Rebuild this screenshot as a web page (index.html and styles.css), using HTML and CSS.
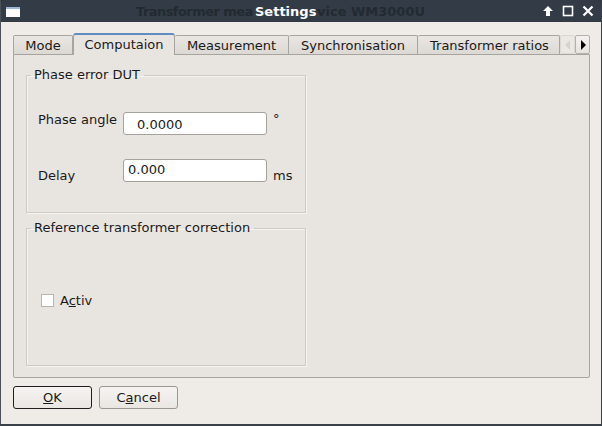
FILE: index.html
```html
<!DOCTYPE html>
<html>
<head>
<meta charset="utf-8">
<link rel="stylesheet" href="styles.css">
</head>
<body>
<div class="window">
  <div class="titlebar">
    <span class="winicon"></span>
    <span class="behind b1">Transformer mea</span>
    <span class="title">Settings</span>
    <span class="behind b2">vice WM3000U</span>
    <div class="wbtns">
      <svg width="12" height="12" viewBox="0 0 12 12"><path d="M6 1 L11 6 H8 V11 H4 V6 H1 Z" fill="#fff"/></svg>
      <svg width="12" height="12" viewBox="0 0 12 12"><rect x="1.5" y="1.5" width="9" height="9" fill="none" stroke="#fff" stroke-width="1.6"/></svg>
      <svg width="12" height="12" viewBox="0 0 12 12"><path d="M1.5 1.5 L10.5 10.5 M10.5 1.5 L1.5 10.5" stroke="#fff" stroke-width="2.2"/></svg>
    </div>
  </div>
  <div class="content">
    <div class="tabbar">
      <div class="tab w-mode">Mode</div>
      <div class="tab active w-comp">Computaion</div>
      <div class="tab w-meas">Measurement</div>
      <div class="tab w-sync">Synchronisation</div>
      <div class="tab w-ratio">Transformer ratios</div>
      <div class="scroll dis"><svg width="6" height="10" viewBox="0 0 6 10"><path d="M5 0 V10 L0 5 Z" fill="#d6d3cf"/></svg></div>
      <div class="scroll"><svg width="6" height="10" viewBox="0 0 6 10"><path d="M1 0 V10 L6 5 Z" fill="#000"/></svg></div>
    </div>
    <div class="pane">
      <fieldset class="group g1">
        <legend>Phase error DUT</legend>
        <div class="row r1">
          <span class="lbl">Phase angle</span>
          <div class="input in1">0.0000</div>
          <span class="unit deg">°</span>
        </div>
        <div class="row r2">
          <span class="lbl">Delay</span>
          <div class="input in2">0.000</div>
          <span class="unit ms">ms</span>
        </div>
      </fieldset>
      <fieldset class="group g2">
        <legend>Reference transformer correction</legend>
        <label class="check"><span class="box"></span><span>A<u>c</u>tiv</span></label>
      </fieldset>
    </div>
    <div class="buttons">
      <div class="btn default"><u>O</u>K</div>
      <div class="btn">C<u>a</u>ncel</div>
    </div>
  </div>
</div>
</body>
</html>
```

FILE: styles.css
```css
html, body {
  margin: 0;
  padding: 0;
  width: 602px;
  height: 426px;
  overflow: hidden;
  background: #2b333b;
}
.window {
  width: 602px;
  height: 426px;
  box-sizing: border-box;
  display: flex;
  flex-direction: column;
  font-family: "DejaVu Sans", sans-serif;
  font-size: 13px;
  color: #1a1a1a;
  border-right: 1px solid #3a4148;
  border-bottom: 2px solid #3a4148;
  border-left: 1px solid #4a5158;
}
.titlebar {
  position: relative;
  height: 22px;
  background: #333c46;
  border-radius: 4px 4px 0 0;
  display: flex;
  align-items: center;
  flex-shrink: 0;
}
.winicon {
  margin-left: 5px;
  width: 14px;
  height: 8px;
  background: #fbfbfb;
  border-top: 2px solid #9fb7d4;
  margin-top: 1px;
}
.behind {
  position: absolute;
  top: 4px;
  font-weight: bold;
  color: #222a31;
  white-space: nowrap;
}
.b1 { left: 135px; letter-spacing: -0.55px; }
.b2 { left: 316px; }
.title {
  position: absolute;
  left: 254px;
  top: 4px;
  color: #fff;
  font-weight: bold;
}
.wbtns {
  margin-left: auto;
  margin-right: 7px;
  display: flex;
  gap: 8px;
  align-items: center;
}
.content {
  flex: 1;
  background: #efebe7;
  padding: 11px 11px 0 11px;
  display: flex;
  flex-direction: column;
}
.tabbar {
  display: flex;
  align-items: flex-end;
  height: 21px;
  position: relative;
  z-index: 2;
  padding-left: 1px;
}
.tab {
  box-sizing: border-box;
  height: 19px;
  border: 1px solid #a8a4a0;
  border-bottom: none;
  border-left: none;
  border-radius: 2px 2px 0 0;
  background: linear-gradient(#eae7e3, #dcd8d3);
  text-align: center;
  line-height: 19px;
  white-space: nowrap;
  overflow: hidden;
}
.tab.w-mode { border-left: 1px solid #a8a4a0; }
.tab.active {
  height: 22px;
  margin-bottom: -1px;
  background: #e8e4e0;
  border-left: 1px solid #a8a4a0;
  border-top: 2px solid #5f8dc2;
  line-height: 19px;
  border-radius: 3px 3px 0 0;
}
.w-mode { width: 60px; }
.w-comp { width: 102px; }
.w-meas { width: 114px; }
.w-sync { width: 129px; }
.w-ratio { width: 142px; text-align: left; padding-left: 12px; }
.scroll {
  box-sizing: border-box;
  width: 15px;
  height: 19px;
  border: 1px solid #b4b0ac;
  border-radius: 2px;
  background: linear-gradient(#f4f2ef, #e6e3df);
  display: flex;
  align-items: center;
  justify-content: center;
}
.scroll.dis { border-color: #dcd9d5; background: #ebe8e4; }
.pane {
  box-sizing: border-box;
  margin-left: 1px;
  width: 577px;
  height: 324px;
  background: #e8e4e0;
  border: 1px solid #a8a4a0;
  border-radius: 0 0 2px 2px;
  padding: 13px 0 0 12px;
  display: flex;
  flex-direction: column;
  gap: 8px;
}
.group {
  box-sizing: border-box;
  width: 280px;
  margin: 0;
  padding: 0;
  border: 1px solid #cdc9c5;
  box-shadow: inset 1px 1px 0 #f6f4f2, 1px 1px 0 #f6f4f2;
  position: relative;
}
.group legend {
  margin-left: 4px;
  padding: 0 4px 0 3px;
  line-height: 14px;
}
.g1 { height: 145px; }
.g2 { height: 145px; }
.row {
  position: absolute;
  left: 11px;
  display: flex;
  align-items: center;
}
.r1 { top: 30px; }
.r2 { top: 76px; }
.lbl { width: 85px; }
.r1 .lbl { margin-top: -8px; }
.r2 .lbl { margin-top: 10px; }
.input {
  box-sizing: border-box;
  width: 144px;
  height: 23px;
  background: #fff;
  border: 1px solid #a5a19d;
  border-radius: 3px;
  line-height: 21px;
}
.in1 { padding-left: 13px; line-height: 23px; }
.in2 { padding-left: 4px; line-height: 19px; }
.unit { margin-left: 6px; }
.deg { margin-top: -10px; }
.ms { margin-top: 10px; }
.check {
  position: absolute;
  left: 14px;
  top: 58px;
  display: flex;
  align-items: center;
  gap: 6px;
}
.box {
  width: 11px;
  height: 11px;
  background: #fff;
  border: 1px solid #b8b4b0;
}
.buttons {
  display: flex;
  gap: 7px;
  padding-top: 8px;
  padding-left: 1px;
}
.btn {
  box-sizing: border-box;
  width: 79px;
  height: 23px;
  border: 1px solid #9a9692;
  border-radius: 3px;
  background: linear-gradient(#f6f4f2, #e9e6e2);
  text-align: center;
  line-height: 21px;
}
.btn.default { border-color: #1e1e1e; }
```
